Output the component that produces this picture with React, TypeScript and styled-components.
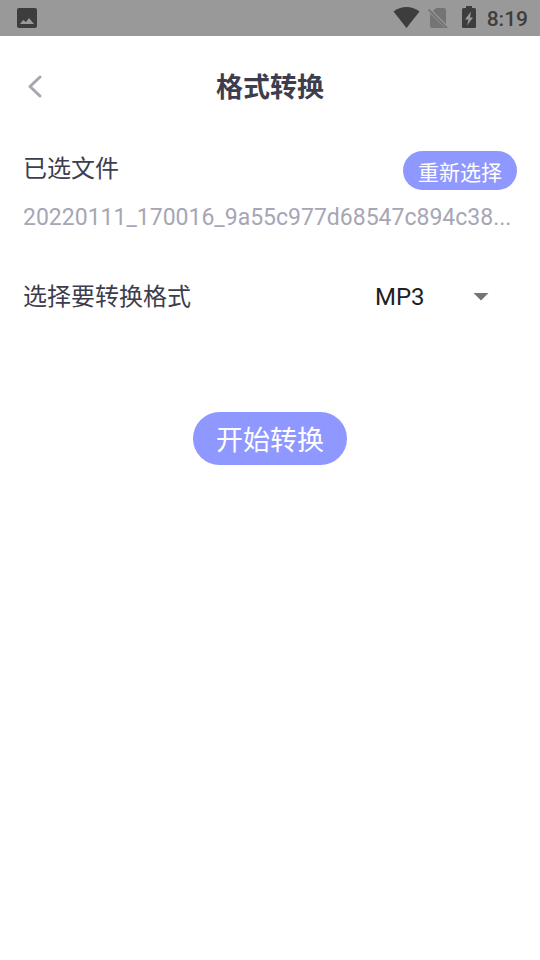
import React, { useState } from "react";
import styled, { createGlobalStyle } from "styled-components";

const GlobalStyle = createGlobalStyle`
  *, *::before, *::after { box-sizing: border-box; }
  body {
    margin: 0;
    background: #ffffff;
    color: #3d3d4e;
    font-family: Roboto, "Noto Sans CJK SC", sans-serif;
  }
  button, select { font-family: inherit; }
`;

const StatusBar = styled.div`
  display: flex;
  align-items: center;
  justify-content: space-between;
  height: 36px;
  padding: 0 12px 0 16px;
  background: #999999;
  color: #3d3d3d;
`;

const StatusIcons = styled.div`
  display: flex;
  align-items: center;
`;

const StatusIcon = styled.svg<{ $gap: number }>`
  display: block;
  margin-right: ${(p) => p.$gap}px;
`;

const Clock = styled.time`
  padding-top: 2px;
  font-size: 21px;
  line-height: 34px;
  font-weight: 500;
`;

const Header = styled.header`
  display: grid;
  grid-template-columns: 48px 1fr 48px;
  align-items: center;
  height: 100px;
  padding: 0 12px;
`;

const BackButton = styled.button`
  display: flex;
  align-items: center;
  justify-content: center;
  height: 48px;
  padding: 0;
  border: 0;
  background: none;
  color: #a6a6b5;
`;

const Title = styled.h1`
  margin: 0;
  padding-top: 4px;
  text-align: center;
  font-size: 27px;
  line-height: 40px;
  font-weight: 700;
`;

const Content = styled.main`
  padding: 15px 23px 0;
`;

const Row = styled.div`
  display: flex;
  align-items: flex-start;
  justify-content: space-between;
`;

const Label = styled.label`
  font-size: 24px;
  line-height: 36px;
`;

const PillButton = styled.button<{ $large?: boolean }>`
  flex: none;
  height: ${(p) => (p.$large ? 53 : 39)}px;
  padding: 4px ${(p) => (p.$large ? 23 : 15)}px 0;
  border: 0;
  border-radius: 27px;
  background: #8f98ff;
  color: #ffffff;
  font-size: ${(p) => (p.$large ? 27 : 21)}px;
  line-height: ${(p) => (p.$large ? 44 : 32)}px;
`;

const FileName = styled.p`
  margin: 10px 0 0;
  color: #a6a6b5;
  font-size: 23px;
  line-height: 36px;
  white-space: nowrap;
`;

const FormatRow = styled(Row)`
  margin-top: 43px;
`;

const SelectBox = styled.div`
  position: relative;
  width: 154px;
`;

const FormatSelect = styled.select`
  appearance: none;
  display: block;
  width: 100%;
  height: 36px;
  padding: 0 48px 0 12px;
  border: 0;
  background: transparent;
  color: #212121;
  font-size: 24px;
`;

const Caret = styled.svg`
  position: absolute;
  top: 14px;
  right: 28px;
  pointer-events: none;
`;

const Actions = styled.div`
  display: flex;
  justify-content: center;
  margin-top: 97px;
`;

export default function App() {
  const [format, setFormat] = useState("MP3");
  return (
    <>
      <GlobalStyle />
      <StatusBar>
        <svg width="22" height="22" viewBox="0 0 22 22" aria-hidden="true">
          <path fill="currentColor" fillRule="evenodd" d="M3 1h16a2 2 0 0 1 2 2v16a2 2 0 0 1-2 2H3a2 2 0 0 1-2-2V3a2 2 0 0 1 2-2zM4 17h14l-5-6-3 4-3-2z" />
        </svg>
        <StatusIcons>
          <StatusIcon $gap={7} width="27" height="24" viewBox="0 0 27 24" aria-hidden="true">
            <path fill="currentColor" d="M13.500 22 .5 5.500C8-.500 19-.500 26.500 5.500z" />
          </StatusIcon>
          <StatusIcon $gap={12} width="22" height="24" viewBox="0 0 22 24" aria-hidden="true">
            <path fill="#747474" d="M7.500 3.500 9 2h8q2 0 2 2v14L6 5zM3 7.500 18 22H5q-2 0-2-2z" />
            <path d="M1.500 3.500 20 22" stroke="#747474" strokeWidth="1.800" />
          </StatusIcon>
          <StatusIcon $gap={10} width="16" height="24" viewBox="0 0 16 24" aria-hidden="true">
            <path fill="currentColor" d="M5 0h6v2h2.500q1.500 0 1.500 1.500V20.500q0 1.500-1.500 1.500h-11Q1 22 1 20.500V3.500Q1 2 2.500 2H5z" />
            <path fill="#999999" d="M10 5.500 4 13.500h3.500L6 19.500l6-8H9z" />
          </StatusIcon>
          <Clock>8:19</Clock>
        </StatusIcons>
      </StatusBar>
      <Header>
        <BackButton type="button" aria-label="返回">
          <svg width="24" height="24" viewBox="0 0 24 24" fill="none" aria-hidden="true">
            <path d="M16 3 6 12.500 16 22" stroke="currentColor" strokeWidth="3" strokeLinecap="round" strokeLinejoin="round" />
          </svg>
        </BackButton>
        <Title>格式转换</Title>
      </Header>
      <Content>
        <Row>
          <Label as="span">已选文件</Label>
          <PillButton type="button">重新选择</PillButton>
        </Row>
        <FileName>20220111_170016_9a55c977d68547c894c38...</FileName>
        <FormatRow>
          <Label htmlFor="format">选择要转换格式</Label>
          <SelectBox>
            <FormatSelect id="format" value={format} onChange={(e) => setFormat(e.target.value)}>
              <option>MP3</option>
              <option>WAV</option>
              <option>AAC</option>
            </FormatSelect>
            <Caret width="16" height="8" viewBox="0 0 16 8" aria-hidden="true">
              <path d="M.5 0h15L8 7.500z" fill="#757575" />
            </Caret>
          </SelectBox>
        </FormatRow>
        <Actions>
          <PillButton type="button" $large>开始转换</PillButton>
        </Actions>
      </Content>
    </>
  );
}
